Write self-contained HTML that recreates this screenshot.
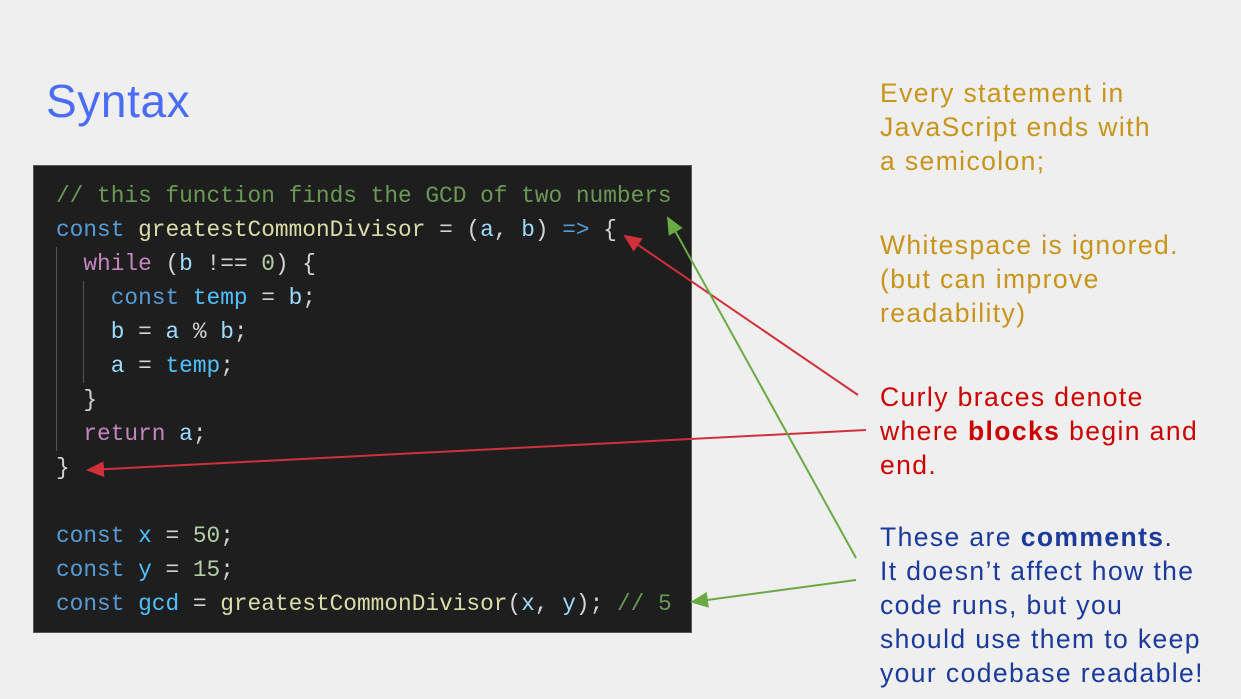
<!DOCTYPE html>
<html><head><meta charset="utf-8"><style>
body{margin:0;width:1241px;height:699px;background:#efefef;position:relative;overflow:hidden;font-family:"Liberation Sans",sans-serif}
h1{position:absolute;left:46px;top:74px;margin:0;font-weight:normal;font-size:46px;color:#4a6cf7;letter-spacing:0.6px}
.code{position:absolute;left:33px;top:165px;width:659px;height:468px;background:#1e1e1e;border:1px solid #555;box-sizing:border-box}
pre{position:absolute;left:22px;top:13px;margin:0;font-family:"Liberation Mono",monospace;font-size:22.8px;line-height:34px;color:#d4d4d4}
.c{color:#6a9955}.k{color:#569cd6}.f{color:#dcdcaa}.v{color:#9cdcfe}.p{color:#c586c0}.n{color:#b5cea8}.vc{color:#4fc1ff}
.g{position:absolute;width:1px;background:#555}
.t{position:absolute;left:880px;font-size:26.5px;line-height:34px;letter-spacing:1.4px;white-space:nowrap}
</style></head><body>
<h1>Syntax</h1>
<div class="code">
<div class="g" style="left:22px;top:81px;height:204px"></div>
<div class="g" style="left:49px;top:115px;height:102px"></div>
<pre><span class="c">// this function finds the GCD of two numbers</span>
<span class="k">const</span> <span class="f">greatestCommonDivisor</span> = (<span class="v">a</span>, <span class="v">b</span>) <span class="k">=&gt;</span> {
  <span class="p">while</span> (<span class="v">b</span> !== <span class="n">0</span>) {
    <span class="k">const</span> <span class="vc">temp</span> = <span class="v">b</span>;
    <span class="v">b</span> = <span class="v">a</span> % <span class="v">b</span>;
    <span class="v">a</span> = <span class="vc">temp</span>;
  }
  <span class="p">return</span> <span class="v">a</span>;
}

<span class="k">const</span> <span class="vc">x</span> = <span class="n">50</span>;
<span class="k">const</span> <span class="vc">y</span> = <span class="n">15</span>;
<span class="k">const</span> <span class="vc">gcd</span> = <span class="f">greatestCommonDivisor</span>(<span class="v">x</span>, <span class="v">y</span>); <span class="c">// 5</span></pre>
</div>
<div class="t" style="top:76px;color:#c8941a">Every statement in<br>JavaScript ends with<br>a semicolon;</div>
<div class="t" style="top:228px;color:#c8941a">Whitespace is ignored.<br>(but can improve<br>readability)</div>
<div class="t" style="top:380px;color:#cc0000">Curly braces denote<br>where <b>blocks</b> begin and<br>end.</div>
<div class="t" style="top:520px;color:#1a3a9c">These are <b>comments</b>.<br>It doesn’t affect how the<br>code runs, but you<br>should use them to keep<br>your codebase readable!</div>
<svg width="1241" height="699" style="position:absolute;left:0;top:0">
<defs>
<marker id="r" markerWidth="10" markerHeight="10" refX="8" refY="5" orient="auto"><path d="M0,1 L9,5 L0,9 Z" fill="#d0303a"/></marker>
<marker id="gr" markerWidth="10" markerHeight="10" refX="8" refY="5" orient="auto"><path d="M0,1 L9,5 L0,9 Z" fill="#6aaa44"/></marker>
</defs>
<line x1="858" y1="395" x2="625" y2="236" stroke="#d0303a" stroke-width="2" marker-end="url(#r)"/>
<line x1="866" y1="430" x2="88" y2="470" stroke="#d0303a" stroke-width="2" marker-end="url(#r)"/>
<line x1="856" y1="558" x2="668" y2="218" stroke="#6aaa44" stroke-width="2" marker-end="url(#gr)"/>
<line x1="856" y1="580" x2="692" y2="602" stroke="#6aaa44" stroke-width="2" marker-end="url(#gr)"/>
</svg>
</body></html>
